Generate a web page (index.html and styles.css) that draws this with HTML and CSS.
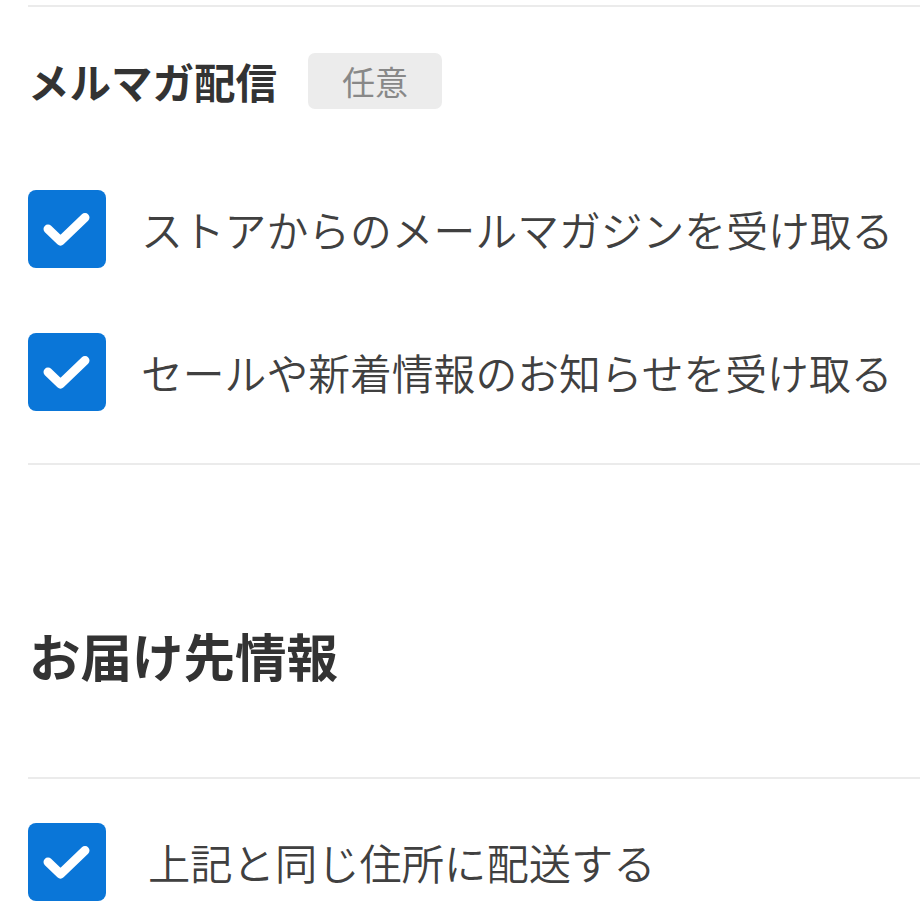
FILE: index.html
```html
<!DOCTYPE html>
<html lang="ja">
<head>
    <meta charset="UTF-8">
    <meta name="viewport" content="width=device-width, initial-scale=1.0">
    <title>メルマガ配信</title>
    <link rel="stylesheet" href="styles.css">
</head>
<body>
    <div id="form">
        <div class="divider"></div>

        <div class="section-head">
            <h2 class="title">メルマガ配信</h2>
            <span class="badge">任意</span>
        </div>

        <label class="check-row first">
            <span class="check">
                <svg viewBox="0 0 78 78"><path d="M20 39 L32.5 51 L57 27.5"/></svg>
            </span>
            <span class="check-label">ストアからのメールマガジンを受け取る</span>
        </label>
        <label class="check-row second">
            <span class="check">
                <svg viewBox="0 0 78 78"><path d="M20 39 L32.5 51 L57 27.5"/></svg>
            </span>
            <span class="check-label">セールや新着情報のお知らせを受け取る</span>
        </label>

        <div class="divider after-list"></div>

        <h2 class="title big">お届け先情報</h2>

        <div class="divider"></div>

        <label class="check-row last">
            <span class="check">
                <svg viewBox="0 0 78 78"><path d="M20 39 L32.5 51 L57 27.5"/></svg>
            </span>
            <span class="check-label wide">上記と同じ住所に配送する</span>
        </label>
    </div>
</body>
</html>
```

FILE: styles.css
```css
body{
    margin: 0;
    background: #fff;
    font-family: "Noto Sans CJK JP", "Noto Sans", sans-serif;
    color: #333;
}
#form{
    padding: 5px 0 0 28px;
}
.divider{
    height: 2px;
    background: #ebebeb;
}
.section-head{
    display: flex;
    align-items: center;
    margin-top: 46px;
}
.title{
    margin: 0;
    font-size: 41.5px;
    font-weight: 700;
    line-height: 56px;
    color: #333;
}
.title.big{
    font-size: 51.5px;
    line-height: 61px;
    margin: 159px 0 92px;
    padding-left: 1px;
}
.badge{
    margin-left: 31px;
    height: 56px;
    padding: 0 34px;
    display: flex;
    align-items: center;
    border-radius: 7px;
    background: #ececec;
    color: #888;
    font-size: 33px;
}
.check-row{
    display: flex;
    align-items: center;
    gap: 35px;
}
.check-row.first{
    margin-top: 81px;
}
.check-row.second{
    margin-top: 65px;
}
.check-row.last{
    margin-top: 44px;
}
.after-list{
    margin-top: 52px;
}
.check{
    width: 78px;
    height: 78px;
    flex-shrink: 0;
    border-radius: 8px;
    background: #0a76d8;
}
.check svg{
    display: block;
    width: 78px;
    height: 78px;
}
.check path{
    fill: none;
    stroke: #fff;
    stroke-width: 9;
    stroke-linecap: round;
    stroke-linejoin: round;
}
.check-label{
    font-size: 41.8px;
    font-weight: 350;
    color: #404040;
    line-height: 56px;
    white-space: nowrap;
}
.check-label.wide{
    font-size: 42.3px;
    padding-left: 7px;
}
```
